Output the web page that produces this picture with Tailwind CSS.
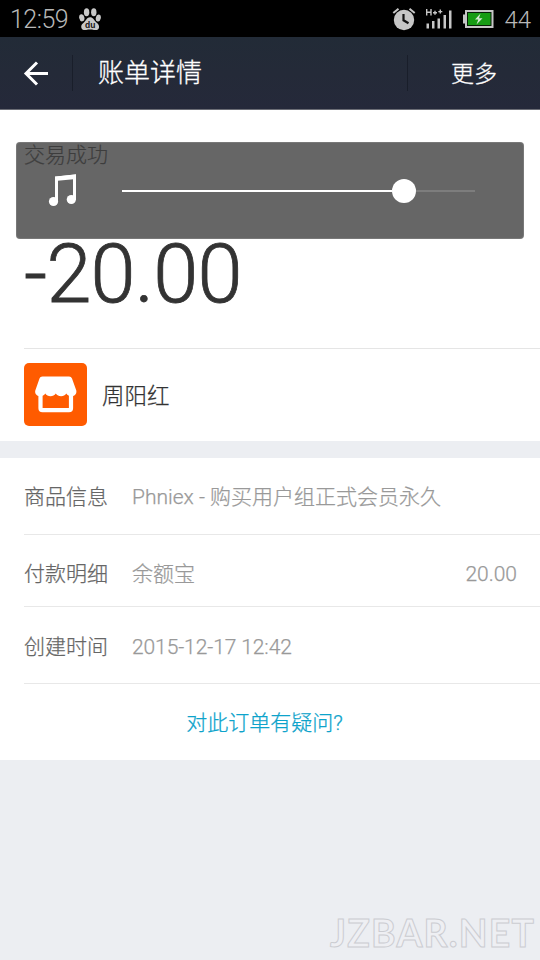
<!DOCTYPE html>
<html lang="zh-CN">
<head>
<meta charset="utf-8">
<title>账单详情</title>
<script src="https://cdn.jsdelivr.net/npm/@tailwindcss/browser@4"></script>
</head>
<body class="bg-[#eceef2]">
<div class="relative flex h-[960px] w-[540px] flex-col overflow-hidden bg-[#eceef2] font-['Roboto','Noto_Sans_CJK_SC',sans-serif] font-light">
  <div class="flex h-[37px] shrink-0 items-center bg-black pl-[10px] pr-[9px] text-[#b8b8b8]">
    <span class="pt-[2px] text-[25px] leading-none tracking-[-0.5px]">12:59</span>
    <svg class="ml-[11px] h-[24px] w-[22px]" viewBox="0 0 22 24" fill="#c8c8c8">
      <ellipse cx="7.6" cy="5.3" rx="2.7" ry="4"/><ellipse cx="14.8" cy="5.3" rx="2.7" ry="4"/>
      <ellipse cx="2.8" cy="10.8" rx="2.6" ry="3.6" transform="rotate(-12 2.8 10.8)"/><ellipse cx="19.3" cy="11" rx="2.5" ry="3.5" transform="rotate(12 19.3 11)"/>
      <path d="M11 10.3c-3 0-3.8 2.9-5.600 4.600C3.600 16.500 2 17.700 2.200 20c.3 3 3 3.300 5 2.900 2.500-.5 5.200-.5 7.700 0 2.600.5 5 0 5.200-2.900.1-2.400-1.600-3.700-3.400-5.300C14.900 13 14 10.300 11 10.300z"/>
      <text x="6" y="20.500" font-size="8.500" font-weight="700" fill="#111" font-family="Liberation Sans">du</text>
    </svg>
    <svg class="ml-auto h-[24px] w-[24px]" viewBox="0 0 24 24">
      <circle cx="12" cy="13" r="10.200" fill="#c6c6c6"/>
      <path d="M1.300 6 6.500 1.700M17.500 1.700l5.200 4.300" stroke="#c6c6c6" stroke-width="2" fill="none"/>
      <path d="M11.500 7v6.300l5 3" stroke="#111" stroke-width="2.200" fill="none"/>
    </svg>
    <svg class="ml-[9px] h-[24px] w-[28px]" viewBox="0 0 28 24" fill="#c6c6c6">
      <path d="M1.500 16.500h2.500v5H1.500zM7 14h2.500v7.500H7zM12.500 11.500H15v10h-2.500zM18.500 8H21v13.500h-2.500zM24 3.500h2.500v18H24z"/>
      <path d="M1.700 2v6.500M6 2v6.500M1.700 5.200H6M8 5.800h4M10 3.800v4M13.300 4.600h4M15.300 2.600v4" fill="none" stroke="#c6c6c6" stroke-width="1.400"/>
    </svg>
    <svg class="ml-[9px] h-[20px] w-[33px]" viewBox="0 0 33 20">
      <path d="M1 5.500h3v9H1z" fill="#c6c6c6"/>
      <rect x="4" y="2" width="26.500" height="16" fill="#082008" stroke="#c6c6c6" stroke-width="2"/>
      <path d="M6 4h22.500v12H6z" fill="#179c14"/>
      <path d="m18.500 4.500-5.500 6h3.300L14.500 15.500l6-6.300H17z" fill="#d8e8d5"/>
    </svg>
    <span class="ml-[9px] pt-[2px] text-[24px] leading-none">44</span>
  </div>

  <header class="flex h-[73px] shrink-0 items-center border-b border-[#6b6d75] bg-linear-to-b from-[#222b37] via-[#242a38] to-[#25293a] text-white">
    <div class="flex w-[72px] justify-center">
      <svg class="h-[26px] w-[26px]" viewBox="0 0 26 26" fill="none" stroke="#fff" stroke-width="3"><path d="M25 13.500H3M14 2.500l-11 11 11 11"/></svg>
    </div>
    <div class="h-[36px] w-px bg-[#191e2a]"></div>
    <h1 class="ml-[25px] text-[26px] leading-none [-webkit-text-stroke:0.3px]">账单详情</h1>
    <div class="ml-auto h-[36px] w-px bg-[#191e2a]"></div>
    <div class="w-[132px] pt-[2px] text-center text-[23px] leading-none [-webkit-text-stroke:0.3px]">更多</div>
  </header>

  <section class="flex h-[331px] shrink-0 flex-col bg-white pl-[24px]">
    <div class="pt-[34px] text-[21px] leading-[22px] text-[#999] [-webkit-text-stroke:0.2px]">交易成功</div>
    <div class="flex h-[182px] items-start pt-[65px] text-[81px] leading-[88px] tracking-[-0.8px] text-[#333] [-webkit-text-stroke:0.8px]">-20.00</div>
    <div class="flex flex-1 items-center border-t border-[#e5e5e5] pb-px">
      <svg class="h-[63px] w-[63px]" viewBox="0 0 63 63">
        <rect width="63" height="63" rx="5" fill="#ff5b00"/>
        <path d="M18.500 13.500h26.500c1.500 0 2.400.7 3 2l4.300 12c.5 2.500-.8 5.700-4.800 5.700-2.300 0-4-1-5.200-2.700-1.300 1.800-2.900 2.700-5.200 2.700s-4-1-5.300-2.700c-1.300 1.800-3 2.700-5.300 2.700s-4-1-5.200-2.700c-1.200 1.800-2.900 2.700-5.100 2.700-4 0-5.600-3-4.900-5.700l4.200-12c.5-1.300 1.400-2 3-2z" fill="#fff"/>
        <path d="M16.500 31v14.200q0 2 2 2h26.500q2 0 2-2V31" fill="none" stroke="#fff" stroke-width="4.200"/>
      </svg>
      <span class="ml-[15px] pt-[3px] text-[22.500px] leading-none text-[#333] [-webkit-text-stroke:0.25px]">周阳红</span>
    </div>
  </section>

  <section class="mt-[17px] flex h-[302px] shrink-0 flex-col bg-white pl-[24px] text-[21px] leading-none text-[#999] [-webkit-text-stroke:0.25px]">
    <div class="flex h-[77px] items-center border-b border-[#e8e8e8] pt-[2px]">
      <span class="w-[108px] text-[#666]">商品信息</span><span>Phniex - 购买用户组正式会员永久</span>
    </div>
    <div class="flex h-[72px] items-center border-b border-[#e8e8e8] pr-[23px] pt-[8px]">
      <span class="w-[108px] text-[#666]">付款明细</span><span>余额宝</span><span class="ml-auto">20.00</span>
    </div>
    <div class="flex h-[77px] items-center border-b border-[#e8e8e8] pt-[4px]">
      <span class="w-[108px] text-[#666]">创建时间</span><span class="tracking-[-0.1px]">2015-12-17 12:42</span>
    </div>
    <div class="flex flex-1 items-center justify-center pr-[35px] pt-[2px] text-[#0da3cb]">对此订单有疑问?</div>
  </section>

  <div class="absolute left-[16px] top-[142px] flex h-[97px] w-[508px] items-center rounded-[4px] bg-black/60 pl-[32px] shadow-[inset_0_0_0_1px_rgba(255,255,255,0.12)]">
    <svg class="h-[33px] w-[30px]" viewBox="0 0 30 33">
      <path d="M8.500 27V4L26.500 2v24" fill="none" stroke="#fff" stroke-width="3"/>
      <path d="M7 2.500 28 .5v4.500L7 7z" fill="#fff"/>
      <circle cx="5.500" cy="27.500" r="4.600" fill="#fff"/><circle cx="23.300" cy="25.500" r="4.600" fill="#fff"/>
    </svg>
    <div class="ml-[44px] h-[2px] w-[270px] bg-white"></div>
    <div class="h-[24px] w-[24px] rounded-full bg-white"></div>
    <div class="h-[2px] w-[59px] bg-[#7d7d7d]"></div>
  </div>

  <svg class="absolute left-[320px] top-[905px] h-[55px] w-[220px]" viewBox="0 0 220 55">
    <text x="10" y="42" textLength="205" lengthAdjust="spacingAndGlyphs" font-family="Lato" font-weight="700" font-size="38.500" letter-spacing="1.200" fill="#eeeff3" stroke="#cbccd1" stroke-width="1">JZBAR.NET</text>
  </svg>
</div>
</body>
</html>
